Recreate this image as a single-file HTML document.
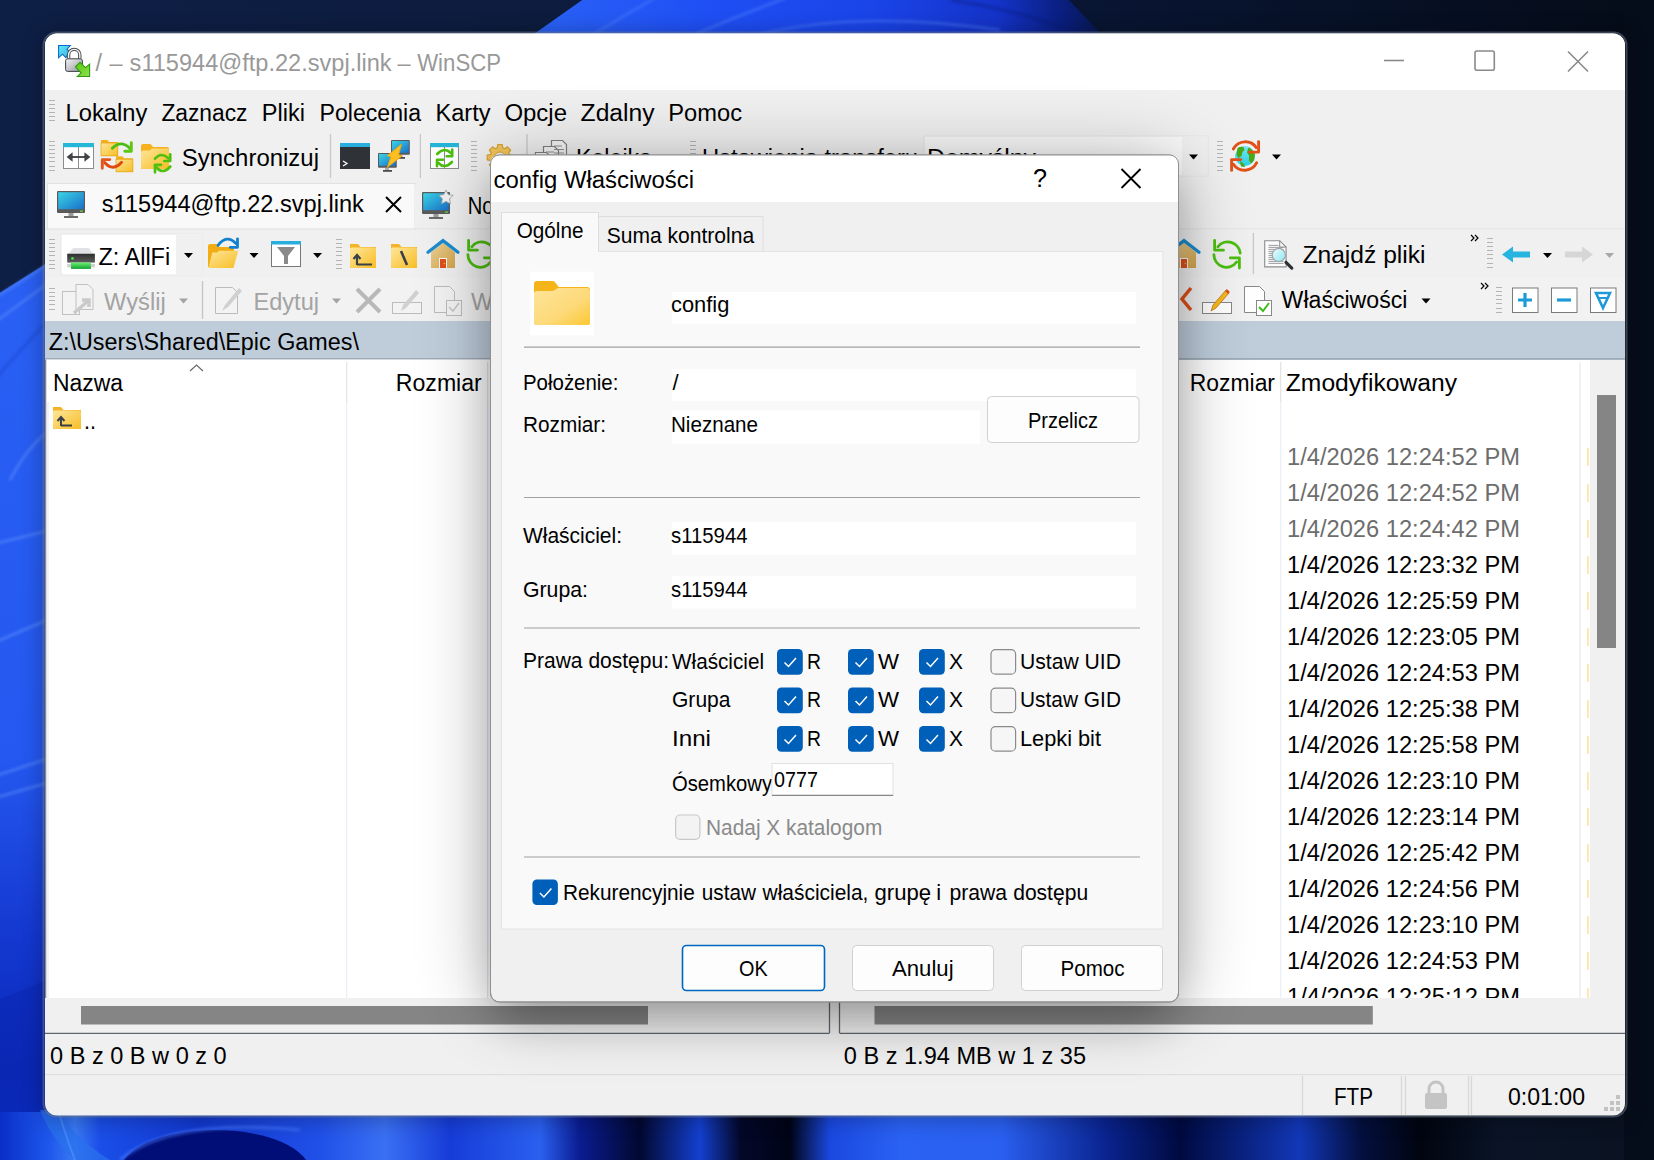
<!DOCTYPE html>
<html><head><meta charset="utf-8"><title>WinSCP</title>
<style>html,body{margin:0;padding:0;width:1654px;height:1160px;overflow:hidden;background:#0b1733}
svg{display:block} text{font-family:"Liberation Sans",sans-serif;white-space:pre}</style></head>
<body><svg width="1654" height="1160" viewBox="0 0 1654 1160" font-family="Liberation Sans, sans-serif">
<defs>
<linearGradient id="bgTop" x1="0" y1="0" x2="1" y2="0">
 <stop offset="0" stop-color="#0e1f46"/><stop offset="0.35" stop-color="#0d1c3e"/><stop offset="0.7" stop-color="#081430"/><stop offset="1" stop-color="#050c18"/>
</linearGradient>
<linearGradient id="bloomTop" x1="0" y1="0" x2="1" y2="0">
 <stop offset="0" stop-color="#2a62f6"/><stop offset="0.3" stop-color="#1f4ff5"/><stop offset="0.6" stop-color="#1a44e8"/><stop offset="0.82" stop-color="#1433c8"/><stop offset="0.93" stop-color="#0a1f80"/><stop offset="1" stop-color="#081850"/>
</linearGradient>
<linearGradient id="leftG" x1="0" y1="0" x2="0" y2="1">
 <stop offset="0" stop-color="#2a60f4"/><stop offset="0.55" stop-color="#2458f0"/><stop offset="0.75" stop-color="#1438d0"/><stop offset="0.9" stop-color="#0a28b8"/><stop offset="1" stop-color="#0c30c8"/>
</linearGradient>
<linearGradient id="botG" x1="0" y1="0" x2="1654" y2="0" gradientUnits="userSpaceOnUse">
 <stop offset="0.0000" stop-color="#0a2ec8"/><stop offset="0.0302" stop-color="#1e58ec"/><stop offset="0.0453" stop-color="#3a7af4"/><stop offset="0.0605" stop-color="#1a4ee8"/><stop offset="0.1209" stop-color="#1238d0"/><stop offset="0.1935" stop-color="#2050e8"/><stop offset="0.2328" stop-color="#3a70f4"/><stop offset="0.2721" stop-color="#163cd8"/><stop offset="0.3265" stop-color="#2a60f0"/><stop offset="0.3507" stop-color="#0a1c90"/><stop offset="0.3869" stop-color="#020830"/><stop offset="0.4232" stop-color="#1440d0"/><stop offset="0.4474" stop-color="#03082a"/><stop offset="0.4776" stop-color="#000416"/><stop offset="0.5018" stop-color="#1a48e0"/><stop offset="0.5441" stop-color="#2a62f4"/><stop offset="0.6046" stop-color="#2a60f0"/><stop offset="0.6681" stop-color="#0a2490"/><stop offset="0.7134" stop-color="#000a40"/><stop offset="0.7860" stop-color="#1238b8"/><stop offset="0.8222" stop-color="#041040"/><stop offset="0.8585" stop-color="#000510"/><stop offset="0.9069" stop-color="#0a1426"/><stop offset="1.0000" stop-color="#0a1220"/>
</linearGradient>
<filter id="dshadow" x="-30%" y="-30%" width="160%" height="160%"><feGaussianBlur stdDeviation="38"/></filter>
<filter id="dshadow2" x="-30%" y="-30%" width="160%" height="160%"><feGaussianBlur stdDeviation="20"/></filter>
<filter id="wshadow" x="-10%" y="-10%" width="120%" height="120%"><feGaussianBlur stdDeviation="10"/></filter>
<filter id="soft2" x="-10%" y="-10%" width="120%" height="120%"><feGaussianBlur stdDeviation="1.5"/></filter>
</defs>
<rect x="0" y="0" width="1654" height="1160" fill="url(#bgTop)" />
<path d="M585,-2 L534,34 L1101,34 L1067,-2 Z" fill="url(#bloomTop)"/>
<g fill="none" stroke="#5c8cff" stroke-width="2" opacity="0.55" filter="url(#soft2)"><path d="M655,-2 Q625,15 594,34"/><path d="M786,-2 Q740,15 696,34"/><path d="M760,34 Q860,10 1000,30"/><path d="M950,0 Q1020,10 1080,34" stroke="#0a1a70"/></g>
<path d="M-2,294 L47,263 L47,1160 L-2,1160 Z" fill="url(#leftG)"/>
<g fill="none" stroke="#6a9cff" stroke-width="2" opacity="0.6" filter="url(#soft2)"><path d="M-2,296 L47,265"/><path d="M-2,320 L47,284"/><path d="M-2,376 Q20,350 47,322" stroke="#1a40c8"/><path d="M10,480 Q25,450 47,432"/><path d="M-2,543 L47,531"/><path d="M-2,641 L47,620"/><path d="M-2,775 L47,759"/><path d="M-2,797 L47,783"/></g>
<path d="M-2,1000 L47,980 L47,1160 L-2,1160 Z" fill="#0a26b0" opacity="0.5"/>
<rect x="0" y="1112" width="1654" height="50" fill="url(#botG)" />
<path d="M40,1110 Q52,1140 75,1160 L110,1160 Q70,1135 60,1110 Z" fill="#2a70ec" opacity="0.75"/>
<path d="M75,1160 Q48,1090 46,1040" fill="none" stroke="#5a9aff" stroke-width="2" opacity="0.5"/>
<ellipse cx="215" cy="1172" rx="95" ry="42" fill="#020e78"/>
<path d="M120,1160 Q170,1118 300,1130" fill="none" stroke="#4a7cff" stroke-width="3" opacity="0.6" filter="url(#soft2)"/>
<rect x="1624" y="0" width="30" height="1160" fill="#050c18" />
<path d="M1624,0 L1654,0 L1654,1160 L1624,1160 Z" fill="#060d1a"/>
<rect x="40" y="30" width="1590" height="1092" rx="14" fill="#000" opacity="0.22" filter="url(#wshadow)"/>
<rect x="43.5" y="32.5" width="1583" height="1084" rx="13" fill="none" stroke="#6a7488" stroke-opacity="0.55" stroke-width="2"/>
<clipPath id="winclip"><rect x="45" y="33.5" width="1580" height="1082" rx="12"/></clipPath>
<g clip-path="url(#winclip)">
<rect x="45" y="33" width="1580" height="1083" fill="#f0f0f0" />
<rect x="45" y="33" width="1580" height="57" fill="#ffffff" />
</g>
<defs><linearGradient id="lockG" x1="0" y1="0" x2="1" y2="1"><stop offset="0" stop-color="#f4f4f6"/><stop offset="0.5" stop-color="#c4c6ca"/><stop offset="1" stop-color="#8e9096"/></linearGradient>
<linearGradient id="blueArr" x1="0" y1="0" x2="1" y2="1"><stop offset="0" stop-color="#6ae8fa"/><stop offset="1" stop-color="#2ab4e0"/></linearGradient>
<linearGradient id="grnArr" x1="0" y1="0" x2="1" y2="1"><stop offset="0" stop-color="#58c810"/><stop offset="1" stop-color="#8ee050"/></linearGradient></defs>
<g>
<path d="M58.6,45.5 L70.3,45.5 L67,49.2 L69.5,51.8 L65.8,57.6 L62.5,54.2 L58.6,57.8 Z" fill="url(#blueArr)" stroke="#0a6cc8" stroke-width="1.1" stroke-linejoin="miter"/>
<path d="M68.6,58.5 v-3.5 a5.6,5.6 0 0 1 11.2,0 v3.5" fill="none" stroke="#4a4c50" stroke-width="3.4"/>
<path d="M68.6,58.5 v-3.5 a5.6,5.6 0 0 1 11.2,0 v3.5" fill="none" stroke="#f4f4f4" stroke-width="1.4"/>
<rect x="65.6" y="58.8" width="16.8" height="12.6" rx="2" fill="url(#lockG)" stroke="#3e4044" stroke-width="1"/>
<path d="M75.4,66.8 L80,62.3 L85.5,67.6 L89.6,64.2 L89.6,76.5 L77.4,76.5 L81,72.8 Z" fill="url(#grnArr)" stroke="#2e9a10" stroke-width="1.1"/>
</g>
<text x="95.5" y="71.0" font-size="23.5" fill="#999999" >/</text>
<text x="109.5" y="71.0" font-size="23.5" fill="#999999" >–</text>
<text x="129.6" y="71.0" font-size="23.5" fill="#999999" textLength="262.0" lengthAdjust="spacingAndGlyphs" >s115944@ftp.22.svpj.link</text>
<text x="397.5" y="71.0" font-size="23.5" fill="#999999" >–</text>
<text x="417.2" y="71.0" font-size="23.5" fill="#999999" textLength="83.8" lengthAdjust="spacingAndGlyphs" >WinSCP</text>
<line x1="1384" y1="60.5" x2="1404" y2="60.5" stroke="#8a8a8a" stroke-width="1.6"/>
<rect x="1475" y="51" width="19.3" height="19.3" rx="2" fill="none" stroke="#8a8a8a" stroke-width="1.6"/>
<path d="M1568,51.5 L1588,71.5 M1588,51.5 L1568,71.5" stroke="#8a8a8a" stroke-width="1.6"/>
<path d="M49,100.5 h6 M49,104.5 h6 M49,108.5 h6 M49,112.5 h6 M49,116.5 h6 M49,120.5 h6" stroke="#b4b4b4" stroke-width="1"/>
<text x="65.6" y="121.0" font-size="23.5" fill="#000" textLength="81.8" lengthAdjust="spacingAndGlyphs" >Lokalny</text>
<text x="161.4" y="121.0" font-size="23.5" fill="#000" textLength="86.1" lengthAdjust="spacingAndGlyphs" >Zaznacz</text>
<text x="261.8" y="121.0" font-size="23.5" fill="#000" textLength="43.2" lengthAdjust="spacingAndGlyphs" >Pliki</text>
<text x="319.5" y="121.0" font-size="23.5" fill="#000" textLength="101.5" lengthAdjust="spacingAndGlyphs" >Polecenia</text>
<text x="435.6" y="121.0" font-size="23.5" fill="#000" textLength="54.9" lengthAdjust="spacingAndGlyphs" >Karty</text>
<text x="504.4" y="121.0" font-size="23.5" fill="#000" textLength="62.6" lengthAdjust="spacingAndGlyphs" >Opcje</text>
<text x="580.6" y="121.0" font-size="23.5" fill="#000" textLength="74.0" lengthAdjust="spacingAndGlyphs" >Zdalny</text>
<text x="668.3" y="121.0" font-size="23.5" fill="#000" textLength="73.7" lengthAdjust="spacingAndGlyphs" >Pomoc</text>
<path d="M49,141.5 h6 M49,145.5 h6 M49,149.5 h6 M49,153.5 h6 M49,157.5 h6 M49,161.5 h6 M49,166.5 h6 M49,170.5 h6" stroke="#b4b4b4" stroke-width="1"/>
<g><rect x="63.5" y="143.5" width="30" height="25" fill="#fff" stroke="#8a8c90" stroke-width="1"/>
<rect x="63" y="143" width="31" height="4.2" fill="#26b6d8"/>
<line x1="78.5" y1="147" x2="78.5" y2="168" stroke="#8a8c90" stroke-width="1"/>
<path d="M66.6,157 L72.6,152.2 V161.8 Z M90.4,157 L84.4,152.2 V161.8 Z" fill="#40444a"/><path d="M72,157 H85" stroke="#2e3236" stroke-width="1.7"/></g>
<path d="M101,155.9 V140 h6.5 l1.5,2 h8.8 v13.9 Z" fill="#f5b01a"/><rect x="101" y="143" width="16.8" height="12.9" fill="url(#fldG)" stroke="#e2a210" stroke-width="0.7"/>
<path d="M116,171.79999999999998 V156.2 h6.5 l1.5,2 h8.899999999999999 v13.6 Z" fill="#f5b01a"/><rect x="116" y="159.2" width="16.9" height="12.6" fill="url(#fldG)" stroke="#e2a210" stroke-width="0.7"/>
<g fill="none" stroke-linecap="round" stroke-linejoin="round"><path d="M112.3,148.2 Q121,139.5 130,148.5" stroke="#4cbc10" stroke-width="2.9"/><path d="M131.3,142.8 V151.3 H124.8" stroke="#5cc814" stroke-width="2.9"/>
<path d="M121.6,162.3 Q113,172 104.6,162.5" stroke="#e04a10" stroke-width="2.9"/><path d="M102.3,168.3 V159.6 H109.8" stroke="#e25618" stroke-width="2.9"/></g>
<path d="M141,169 V146 a2,2 0 0 1 2,-2 h7.5 l2.5,3 h14 a2,2 0 0 1 2,2 V169 Z" fill="#f6b11c"/>
<path d="M141,168 V152.5 a2,2 0 0 1 2,-2 h7 l2,-2 h15 a2,2 0 0 1 2,2 V168 a1,1 0 0 1 -1,1 H142 a1,1 0 0 1 -1,-1 Z" fill="url(#fldG)"/>
<g fill="none" stroke-linecap="round" stroke-linejoin="round" stroke="#50c010" stroke-width="2.7"><path d="M155,158.7 Q161.5,151.5 168.3,158.3"/><path d="M170.2,154.3 V161 H164.3"/>
<path d="M170.3,166.5 Q163,175 156.5,167.5"/><path d="M155,172.3 V164.8 H161"/></g>
<text x="181.8" y="166.0" font-size="23.5" fill="#000" textLength="137.2" lengthAdjust="spacingAndGlyphs" >Synchronizuj</text>
<line x1="330.5" y1="134" x2="330.5" y2="178" stroke="#c8c8c8" stroke-width="1.3"/>
<g><rect x="340" y="143" width="30" height="26" fill="#2f3236"/><rect x="340" y="143" width="30" height="4" fill="#27aede"/>
<path d="M343,161 l4,2.5 l-4,2.5" fill="none" stroke="#fff" stroke-width="1.3"/></g>
<g><rect x="391" y="140" width="18.8" height="14.8" rx="1" fill="#58595c"/><rect x="392" y="141" width="16.8" height="11.8" fill="url(#monG)"/><rect x="398.5" y="155" width="4" height="2" fill="#a8acb0"/><rect x="396" y="157" width="9" height="1.8" fill="#4a4c50"/>
<rect x="378" y="153" width="18.8" height="14.8" rx="1" fill="#58595c"/><rect x="379" y="154" width="16.8" height="11.8" fill="url(#monG)"/><rect x="385" y="168" width="4" height="2" fill="#a8acb0"/><rect x="383" y="170" width="9" height="1.8" fill="#4a4c50"/>
<path d="M401.7,144.1 L387.2,155.7 L390.8,156.9 L387.2,167.4 L402,156 L398.6,154.8 Z" fill="#fbbf24" stroke="#f0a500" stroke-width="0.8" stroke-linejoin="round"/></g>
<line x1="420.4" y1="134" x2="420.4" y2="178" stroke="#c8c8c8" stroke-width="1.3"/>
<g><rect x="430.5" y="143.5" width="28" height="25" fill="#fff" stroke="#8a8c90" stroke-width="1"/><rect x="430" y="143" width="29" height="4.2" fill="#26b4d8"/>
<line x1="444.5" y1="147" x2="444.5" y2="168" stroke="#8a8c90" stroke-width="1"/>
<g fill="none" stroke="#4cbe10" stroke-width="2.6" stroke-linecap="round" stroke-linejoin="round"><path d="M437.2,154 Q444.5,146.5 450.8,153"/><path d="M452.2,149.6 V156.3 H446.7"/>
<path d="M452,162 Q444.5,169.5 438.5,163"/><path d="M437,166.3 V159.8 H443"/></g></g>
<path d="M471,141.5 h6 M471,145.5 h6 M471,149.5 h6 M471,153.5 h6 M471,157.5 h6 M471,161.5 h6 M471,166.5 h6 M471,170.5 h6" stroke="#b4b4b4" stroke-width="1"/>
<path d="M509.6,154.7 L512.8,155.2 L512.8,159.8 L509.6,160.3 L508.8,162.3 L510.7,164.9 L507.4,168.2 L504.8,166.3 L502.8,167.1 L502.3,170.3 L497.7,170.3 L497.2,167.1 L495.2,166.3 L492.6,168.2 L489.3,164.9 L491.2,162.3 L490.4,160.3 L487.2,159.8 L487.2,155.2 L490.4,154.7 L491.2,152.7 L489.3,150.1 L492.6,146.8 L495.2,148.7 L497.2,147.9 L497.7,144.7 L502.3,144.7 L502.8,147.9 L504.8,148.7 L507.4,146.8 L510.7,150.1 L508.8,152.7 Z" fill="#f2c65a" stroke="#d9a332" stroke-width="1.2" stroke-linejoin="round"/><circle cx="500" cy="157.5" r="5.5" fill="#f0f0f0" stroke="#d9a332" stroke-width="1"/>
<line x1="527" y1="134" x2="527" y2="178" stroke="#c8c8c8" stroke-width="1.3"/>
<g fill="#f6f6f6" stroke="#808080" stroke-width="1.2"><path d="M551.5,140.5 h11 l4,4 v15 h-15 Z"/><path d="M543.5,146.5 h11 l4,4 v15 h-15 Z"/><path d="M535.5,152.5 h11 l4,4 v15 h-15 Z"/></g>
<path d="M554,146 h8 M554,149.5 h10 M554,153 h10 M546,152 h8 M546,155.5 h10" stroke="#909090" stroke-width="1"/>
<text x="576.0" y="166.0" font-size="23.5" fill="#000" textLength="76.0" lengthAdjust="spacingAndGlyphs" >Kolejka</text>
<path d="M668.5,155.5 h9 l-4.5,5 Z" fill="#000"/>
<path d="M690,141.5 h6 M690,145.5 h6 M690,149.5 h6 M690,153.5 h6 M690,157.5 h6 M690,161.5 h6 M690,166.5 h6 M690,170.5 h6" stroke="#b4b4b4" stroke-width="1"/>
<text x="702.0" y="166.0" font-size="23.5" fill="#000" textLength="216.0" lengthAdjust="spacingAndGlyphs" >Ustawienia transferu</text>
<rect x="924" y="136" width="284" height="40" fill="#f9f9f9" stroke="#e3e3e3" stroke-width="1"/>
<rect x="1182" y="137" width="25" height="38" fill="#f0f0f0" />
<text x="927.0" y="166.0" font-size="23.5" fill="#000" textLength="109.0" lengthAdjust="spacingAndGlyphs" >Domyślny</text>
<path d="M1189.0,154.5 h9 l-4.5,5 Z" fill="#000"/>
<path d="M1217,141.5 h6 M1217,145.5 h6 M1217,149.5 h6 M1217,153.5 h6 M1217,157.5 h6 M1217,161.5 h6 M1217,166.5 h6 M1217,170.5 h6" stroke="#b4b4b4" stroke-width="1"/>
<defs><linearGradient id="globeG" x1="0" y1="0" x2="0" y2="1"><stop offset="0" stop-color="#74e6f6"/><stop offset="1" stop-color="#2ad0e0"/></linearGradient></defs>
<g><circle cx="1245" cy="156" r="10" fill="url(#globeG)"/>
<path d="M1237.5,148 q3,-2 6,-1 l1,3 l-2,2 l-1,4 l-3,2 l-2,-3 Z M1249,147.5 q4,2 6,7 l-1,6 l-3,3 l-2,-3 l0,-5 l-2,-3 l1,-4 Z M1240,161 l4,3 l1,3 l-4,-0.5 Z" fill="#4aa818"/>
<g fill="none" stroke="#e2501a" stroke-width="2.9" stroke-linecap="round" stroke-linejoin="round">
<path d="M1233.3,149 A13.5,13.5 0 0 1 1256.3,147.6"/><path d="M1258.6,141.6 V152.1 H1249.2"/>
<path d="M1256.7,162.7 A13.5,13.5 0 0 1 1233.4,164.3"/><path d="M1231.6,170.4 V159.6 H1240.8"/></g></g>
<path d="M1272.0,154.5 h9 l-4.5,5 Z" fill="#000"/>
<rect x="45" y="180" width="1580" height="49" fill="#f0f0f0" />
<rect x="47.5" y="183.5" width="367.5" height="46" fill="#f9f9f9" stroke="#e2e2e2" stroke-width="1"/>
<rect x="415" y="185.5" width="120" height="43" fill="#f0f0f0" />
<line x1="45" y1="229" x2="1625" y2="229" stroke="#dedede" stroke-width="1"/>
<defs><linearGradient id="homeG" x1="0" y1="0" x2="1" y2="1"><stop offset="0" stop-color="#ecd298"/><stop offset="1" stop-color="#d4a448"/></linearGradient></defs><defs><linearGradient id="monG" x1="0" y1="0" x2="1" y2="1"><stop offset="0" stop-color="#3ad4e6"/><stop offset="1" stop-color="#1a70c8"/></linearGradient></defs>
<g><rect x="57" y="191" width="28" height="22" rx="1" fill="#5a5a5a"/><rect x="58.2" y="192.2" width="25.6" height="17" fill="url(#monG)"/>
<rect x="80" y="210.5" width="3" height="1.2" fill="#6cdc3c"/><rect x="68.5" y="213" width="5" height="3" fill="#9a9a9a"/><rect x="64" y="216" width="14" height="2" fill="#6a6a6a"/></g>
<text x="101.8" y="212.0" font-size="23.5" fill="#000" textLength="262.0" lengthAdjust="spacingAndGlyphs" >s115944@ftp.22.svpj.link</text>
<path d="M386,197 L401,212 M401,197 L386,212" stroke="#000" stroke-width="2"/>
<g><rect x="422" y="192" width="28" height="22" rx="1" fill="#5a5a5a"/><rect x="423.2" y="193.2" width="25.6" height="17" fill="url(#monG)"/>
<rect x="445" y="211.5" width="3" height="1.2" fill="#6cdc3c"/><rect x="433.5" y="214" width="5" height="3" fill="#9a9a9a"/><rect x="429" y="217" width="14" height="2" fill="#6a6a6a"/><path d="M446,190 l2.2,4.6 l5,0.7 l-3.6,3.5 l0.9,5 l-4.5,-2.4 l-4.5,2.4 l0.9,-5 l-3.6,-3.5 l5,-0.7 Z" fill="#f2f2f2" stroke="#9a9a9a" stroke-width="0.8"/></g>
<text x="467.7" y="214.0" font-size="23.5" fill="#000" textLength="102.0" lengthAdjust="spacingAndGlyphs" >Nowa karta</text>
<rect x="45" y="229.5" width="1580" height="48" fill="#f0f0f0" />
<path d="M49,239.5 h6 M49,243.5 h6 M49,247.5 h6 M49,251.5 h6 M49,255.5 h6 M49,260.5 h6 M49,264.5 h6 M49,268.5 h6" stroke="#b4b4b4" stroke-width="1"/>
<rect x="61" y="234" width="141" height="41" fill="#ffffff" stroke="#e6e6e6" stroke-width="1"/>
<rect x="176" y="235" width="25.5" height="39" fill="#f0f0f0" />
<path d="M184.0,253.0 h9 l-4.5,5 Z" fill="#000"/>
<defs><linearGradient id="drvG" x1="0" y1="0" x2="0" y2="1"><stop offset="0" stop-color="#2e2e2e"/><stop offset="1" stop-color="#5c5c5c"/></linearGradient>
<linearGradient id="grnG" x1="0" y1="0" x2="0" y2="1"><stop offset="0" stop-color="#6af070"/><stop offset="1" stop-color="#10a030"/></linearGradient></defs>
<g><path d="M73.2,248.1 H88.7 L93.4,253.5 H68.5 Z" fill="#e0e2e6"/><rect x="67.2" y="253.7" width="27.7" height="8.9" fill="url(#drvG)"/><circle cx="72.5" cy="258.4" r="1.4" fill="#3ce048"/>
<rect x="67.2" y="264" width="27.7" height="3.4" fill="#d0d0d0"/><rect x="71" y="262.6" width="19.9" height="6.3" fill="url(#grnG)"/></g>
<text x="98.4" y="265.2" font-size="23.5" fill="#000" textLength="71.8" lengthAdjust="spacingAndGlyphs" >Z: AllFi</text>
<path d="M208,267 V246 a2,2 0 0 1 2,-2 h6.5 l2.5,3 h13 a2,2 0 0 1 2,2 V267 Z" fill="#f2ad14"/>
<path d="M212.3,252.6 l4.8,0 l2,-1.8 h19.2 l-4.5,16 a1.5,1.5 0 0 1 -1.5,1.2 H209.8 a1.2,1.2 0 0 1 -1.1,-1.5 Z" fill="url(#fldG)"/>
<g fill="none" stroke-linecap="round" stroke-linejoin="round" stroke="#1080d0" stroke-width="2.8"><path d="M218,245.3 Q227,234 236,243.5"/><path d="M237.5,238.8 V247.3 H230.3"/></g>
<path d="M249.5,253.0 h9 l-4.5,5 Z" fill="#000"/>
<g><rect x="271.5" y="241.5" width="29" height="25" fill="#fff" stroke="#777" stroke-width="1"/><rect x="271" y="241" width="30" height="3.5" fill="#27aede"/>
<path d="M277,247 h18 l-7,9 v8 h-4 v-8 Z" fill="#8a8a8a"/></g>
<path d="M313.0,253.0 h9 l-4.5,5 Z" fill="#000"/>
<path d="M336,239.5 h6 M336,243.5 h6 M336,247.5 h6 M336,251.5 h6 M336,255.5 h6 M336,260.5 h6 M336,264.5 h6 M336,268.5 h6" stroke="#b4b4b4" stroke-width="1"/>
<defs><linearGradient id="fldG" x1="0" y1="0" x2="1" y2="1"><stop offset="0" stop-color="#fde69a"/><stop offset="1" stop-color="#f8bd24"/></linearGradient></defs>
<g><path d="M350,244 h8 l2.5,3 h15.5 v21 h-26 Z" fill="#f3b42a"/><rect x="350" y="247.5" width="26" height="20.5" rx="1.5" fill="url(#fldG)"/></g>
<path d="M357,265 v-9 M353.5,259 l3.5,-4 l3.5,4 M357,264.5 h15" fill="none" stroke="#3a4048" stroke-width="2.2"/>
<g><path d="M391,244 h8 l2.5,3 h15.5 v21 h-26 Z" fill="#f3b42a"/><rect x="391" y="247.5" width="26" height="20.5" rx="1.5" fill="url(#fldG)"/></g>
<path d="M401,251 l6,14" stroke="#3a4048" stroke-width="2.6"/>
<g><path d="M431,252.5 l12,-10 l12,10 V268 H431 Z" fill="url(#homeG)"/><path d="M428,252.3 L443,240.6 L458,252.3" fill="none" stroke="#1a8cd0" stroke-width="3.3" stroke-linecap="round" stroke-linejoin="miter"/>
<rect x="439" y="258" width="8" height="10" fill="#fafafa"/><rect x="440" y="259" width="6" height="9" fill="#e0501a"/><circle cx="444.3" cy="263.5" r="0.7" fill="#f4c040"/></g>
<g transform="translate(-746,0)" fill="none" stroke="#4cbe10" stroke-width="2.8" stroke-linecap="round" stroke-linejoin="round">
<path d="M1217.8,246.8 A12.5,12.5 0 0 1 1240.2,253.2"/><path d="M1214.6,240.3 V250.2 H1223.5"/>
<path d="M1213.9,254.6 A12.5,12.5 0 0 0 1236.6,262"/><path d="M1239.4,268 V257.8 H1230.3"/></g>
<g><path d="M1172,252.5 l12,-10 l12,10 V268 H1172 Z" fill="url(#homeG)"/><path d="M1169,252.3 L1184,240.6 L1199,252.3" fill="none" stroke="#1a8cd0" stroke-width="3.3" stroke-linecap="round" stroke-linejoin="miter"/>
<rect x="1180" y="258" width="8" height="10" fill="#fafafa"/><rect x="1181" y="259" width="6" height="9" fill="#e0501a"/><circle cx="1185.3" cy="263.5" r="0.7" fill="#f4c040"/></g>
<g transform="translate(0,0)" fill="none" stroke="#4cbe10" stroke-width="2.8" stroke-linecap="round" stroke-linejoin="round">
<path d="M1217.8,246.8 A12.5,12.5 0 0 1 1240.2,253.2"/><path d="M1214.6,240.3 V250.2 H1223.5"/>
<path d="M1213.9,254.6 A12.5,12.5 0 0 0 1236.6,262"/><path d="M1239.4,268 V257.8 H1230.3"/></g>
<line x1="1253.4" y1="233" x2="1253.4" y2="274" stroke="#c8c8c8" stroke-width="1.3"/>
<defs><linearGradient id="magG" x1="0" y1="0" x2="1" y2="1"><stop offset="0" stop-color="#f0fcfe"/><stop offset="1" stop-color="#88e8f0"/></linearGradient></defs>
<g><path d="M1264.7,240.7 h15 l6.4,6.4 v19.8 h-21.4 Z" fill="#fbfbfb" stroke="#8a8c90" stroke-width="1.1"/><path d="M1279.7,240.7 v6.4 h6.4" fill="none" stroke="#8a8c90" stroke-width="1"/>
<path d="M1268.5,245.4 h10 M1268.5,247.4 h15 M1268.5,249.4 h15 M1268.5,251.4 h15 M1268.5,253.4 h15 M1268.5,255.4 h15 M1268.5,257.4 h15 M1268.5,259.4 h15 M1268.5,261.4 h15 M1268.5,263.4 h15" stroke="#909296" stroke-width="0.9"/>
<circle cx="1278.8" cy="255" r="6.6" fill="url(#magG)" stroke="#a0a2a6" stroke-width="1.2"/><path d="M1286,262.3 l5.8,5.8" stroke="#2e3034" stroke-width="3.2" stroke-linecap="round"/></g>
<text x="1302.5" y="262.5" font-size="23.5" fill="#000" textLength="123.0" lengthAdjust="spacingAndGlyphs" >Znajdź pliki</text>
<path d="M1471,235 l3,3 l-3,3 M1475,235 l3,3 l-3,3" fill="none" stroke="#000" stroke-width="1.2"/>
<path d="M1487,238.5 h6 M1487,242.5 h6 M1487,246.5 h6 M1487,250.5 h6 M1487,254.5 h6 M1487,258.5 h6 M1487,263.5 h6 M1487,267.5 h6" stroke="#b4b4b4" stroke-width="1"/>
<path d="M1502,254.5 l11,-8 v5 h17 v6 h-17 v5 Z" fill="#27b4e0"/>
<path d="M1543.0,253.0 h9 l-4.5,5 Z" fill="#000"/>
<path d="M1593,254.5 l-11,-8 v5 h-17 v6 h17 v5 Z" fill="#d6d6d6"/>
<path d="M1605.0,253.0 h9 l-4.5,5 Z" fill="#a8a8a8"/>
<rect x="45" y="277.5" width="1580" height="43.5" fill="#f2f2f2" />
<path d="M49,288.5 h6 M49,292.5 h6 M49,296.5 h6 M49,300.5 h6 M49,304.5 h6 M49,309.5 h6" stroke="#b4b4b4" stroke-width="1"/>
<g opacity="0.55"><rect x="62.5" y="291.5" width="17" height="23" fill="#f4f4f4" stroke="#999" stroke-width="1"/><path d="M76,284.5 h12 l5,5 v20 h-17 Z" fill="#f4f4f4" stroke="#999" stroke-width="1"/>
<path d="M74,313 l14,-12 M82,300 h7 v7" fill="none" stroke="#aaa" stroke-width="3.5"/></g>
<text x="104.0" y="309.6" font-size="23.5" fill="#a3a3a3" textLength="61.7" lengthAdjust="spacingAndGlyphs" >Wyślij</text>
<path d="M179.0,298.5 h9 l-4.5,5 Z" fill="#a3a3a3"/>
<line x1="202.5" y1="281" x2="202.5" y2="319" stroke="#c4c4c4" stroke-width="1.3"/>
<g opacity="0.6"><path d="M215.5,287.5 h17 l5,5 v21 h-22 Z" fill="#f4f4f4" stroke="#999" stroke-width="1"/><path d="M222,311 l3,-6 l14,-17 l3,3 l-14,16 Z" fill="#bbb"/></g>
<text x="253.5" y="309.6" font-size="23.5" fill="#a3a3a3" textLength="65.5" lengthAdjust="spacingAndGlyphs" >Edytuj</text>
<path d="M332.0,298.5 h9 l-4.5,5 Z" fill="#a3a3a3"/>
<path d="M357,289 L380,312 M380,289 L357,312" stroke="#b8b8b8" stroke-width="4"/>
<g opacity="0.6"><rect x="392.5" y="302.5" width="29" height="11" fill="#f4f4f4" stroke="#999" stroke-width="1"/><path d="M401,311 l2,-6 l13,-15 l3,3 l-13,15 Z" fill="#bbb"/></g>
<g opacity="0.6"><path d="M434.5,286.5 h15 l5,5 v21 h-20 Z" fill="#f4f4f4" stroke="#999" stroke-width="1"/><rect x="446.5" y="300.5" width="15" height="15" fill="#f4f4f4" stroke="#999" stroke-width="1"/><path d="M449,307 l4,4 l6,-8" fill="none" stroke="#aaa" stroke-width="1.5"/></g>
<text x="471.0" y="309.6" font-size="23.5" fill="#a3a3a3" textLength="126.0" lengthAdjust="spacingAndGlyphs" >Właściwości</text>
<path d="M1191,288 l-9,11 l9,11" fill="none" stroke="#e0501a" stroke-width="3.5"/>
<g><rect x="1202.5" y="302.5" width="29" height="11" fill="#fff" stroke="#888" stroke-width="1"/><path d="M1211,311 l2,-6 l13,-15 l3,3 l-13,15 Z" fill="#f4b81c" stroke="#c07818" stroke-width="0.8"/><path d="M1226,290 l3,3" stroke="#e0501a" stroke-width="2.5"/></g>
<g><path d="M1244.5,286.5 h15 l5,5 v21 h-20 Z" fill="#fff" stroke="#888" stroke-width="1"/><rect x="1256.5" y="300.5" width="15" height="15" fill="#fff" stroke="#888" stroke-width="1"/><path d="M1259,307 l4,4 l6,-8" fill="none" stroke="#3cba1a" stroke-width="2"/></g>
<text x="1281.6" y="308.4" font-size="23.5" fill="#000" textLength="125.8" lengthAdjust="spacingAndGlyphs" >Właściwości</text>
<path d="M1421.5,298.5 h9 l-4.5,5 Z" fill="#000"/>
<path d="M1481,283 l3,3 l-3,3 M1485,283 l3,3 l-3,3" fill="none" stroke="#000" stroke-width="1.2"/>
<path d="M1496,287.5 h6 M1496,291.5 h6 M1496,295.5 h6 M1496,299.5 h6 M1496,303.5 h6 M1496,308.5 h6 M1496,312.5 h6" stroke="#b4b4b4" stroke-width="1"/>
<rect x="1512.5" y="288" width="25.5" height="24.5" fill="#ffffff" stroke="#7a7a7a" stroke-width="1"/>
<rect x="1551.5" y="288" width="25.5" height="24.5" fill="#ffffff" stroke="#7a7a7a" stroke-width="1"/>
<rect x="1590.5" y="288" width="25.5" height="24.5" fill="#ffffff" stroke="#7a7a7a" stroke-width="1"/>
<path d="M1525,293 v14 M1518,300 h14" stroke="#1e9ad8" stroke-width="3.2"/>
<path d="M1557,300 h14" stroke="#1e9ad8" stroke-width="3.2"/>
<path d="M1596,293 h14 l-7,15 Z" fill="none" stroke="#1e9ad8" stroke-width="2.6"/><path d="M1598.5,298 h9" stroke="#1e9ad8" stroke-width="2"/>
<defs><linearGradient id="pathG" x1="0" y1="0" x2="1" y2="0"><stop offset="0" stop-color="#bccad9"/><stop offset="0.85" stop-color="#bfcddb"/><stop offset="1" stop-color="#a9b7c6"/></linearGradient></defs>
<rect x="45" y="321" width="784" height="38.5" fill="#bfcddb" />
<rect x="839" y="321" width="786" height="38.5" fill="#bfcddb" />
<line x1="45" y1="359" x2="1625" y2="359" stroke="#7d8a96" stroke-width="1"/>
<text x="48.7" y="349.8" font-size="23.5" fill="#000" textLength="310.3" lengthAdjust="spacingAndGlyphs" >Z:\Users\Shared\Epic Games\</text>
<rect x="45" y="359.5" width="784" height="638.5" fill="#ffffff" />
<rect x="45" y="359.5" width="1.3" height="638.5" fill="#8a8a8a" />
<rect x="839" y="360" width="786" height="638" fill="#ffffff" />
<line x1="346.7" y1="362" x2="346.7" y2="402" stroke="#e4e4e4" stroke-width="1.3"/>
<line x1="487.7" y1="362" x2="487.7" y2="402" stroke="#e4e4e4" stroke-width="1.3"/>
<text x="53.0" y="391.0" font-size="23.5" fill="#000" textLength="70.0" lengthAdjust="spacingAndGlyphs" >Nazwa</text>
<text x="395.8" y="391.0" font-size="23.5" fill="#000" textLength="86.0" lengthAdjust="spacingAndGlyphs" >Rozmiar</text>
<path d="M190,371 l6.5,-6 l6.5,6" fill="none" stroke="#6a6a6a" stroke-width="1.2"/>
<line x1="48" y1="402" x2="48" y2="998" stroke="#e6eef8" stroke-width="1.3"/>
<line x1="346.7" y1="402" x2="346.7" y2="998" stroke="#eaf0f8" stroke-width="1.3"/>
<line x1="487.7" y1="402" x2="487.7" y2="998" stroke="#dde5ee" stroke-width="1.3"/>
<g><path d="M53,407 h8 l2.5,3 h17.5 v19 h-28 Z" fill="#f3b42a"/><rect x="53" y="410.5" width="28" height="18.5" rx="1.5" fill="url(#fldG)"/></g>
<path d="M61,426 v-8 M57.5,421 l3.5,-4 l3.5,4 M61,425.5 h11" fill="none" stroke="#3a4048" stroke-width="2"/>
<text x="84.0" y="429.0" font-size="23.5" fill="#000" textLength="12.0" lengthAdjust="spacingAndGlyphs" >..</text>
<text x="1189.8" y="391.0" font-size="23.5" fill="#000" textLength="85.2" lengthAdjust="spacingAndGlyphs" >Rozmiar</text>
<line x1="1280.7" y1="362" x2="1280.7" y2="402" stroke="#e4e4e4" stroke-width="1.3"/>
<text x="1285.8" y="391.0" font-size="23.5" fill="#000" textLength="171.2" lengthAdjust="spacingAndGlyphs" >Zmodyfikowany</text>
<line x1="1580" y1="362" x2="1580" y2="998" stroke="#ebebeb" stroke-width="1.3"/>
<line x1="1280.7" y1="402" x2="1280.7" y2="998" stroke="#eaf0f8" stroke-width="1.3"/>
<clipPath id="rpclip"><rect x="839" y="402" width="751" height="596"/></clipPath><g clip-path="url(#rpclip)">
<text x="1287.0" y="465.0" font-size="23.5" fill="#6d6d6d" textLength="233.0" lengthAdjust="spacingAndGlyphs" >1/4/2026 12:24:52 PM</text>
<rect x="1587" y="448" width="2" height="18" fill="#fde9b0" />
<text x="1287.0" y="501.0" font-size="23.5" fill="#6d6d6d" textLength="233.0" lengthAdjust="spacingAndGlyphs" >1/4/2026 12:24:52 PM</text>
<rect x="1587" y="484" width="2" height="18" fill="#fde9b0" />
<text x="1287.0" y="537.0" font-size="23.5" fill="#6d6d6d" textLength="233.0" lengthAdjust="spacingAndGlyphs" >1/4/2026 12:24:42 PM</text>
<rect x="1587" y="520" width="2" height="18" fill="#fde9b0" />
<text x="1287.0" y="573.0" font-size="23.5" fill="#000" textLength="233.0" lengthAdjust="spacingAndGlyphs" >1/4/2026 12:23:32 PM</text>
<rect x="1587" y="556" width="2" height="18" fill="#fde9b0" />
<text x="1287.0" y="609.0" font-size="23.5" fill="#000" textLength="233.0" lengthAdjust="spacingAndGlyphs" >1/4/2026 12:25:59 PM</text>
<rect x="1587" y="592" width="2" height="18" fill="#fde9b0" />
<text x="1287.0" y="645.0" font-size="23.5" fill="#000" textLength="233.0" lengthAdjust="spacingAndGlyphs" >1/4/2026 12:23:05 PM</text>
<rect x="1587" y="628" width="2" height="18" fill="#fde9b0" />
<text x="1287.0" y="681.0" font-size="23.5" fill="#000" textLength="233.0" lengthAdjust="spacingAndGlyphs" >1/4/2026 12:24:53 PM</text>
<rect x="1587" y="664" width="2" height="18" fill="#fde9b0" />
<text x="1287.0" y="717.0" font-size="23.5" fill="#000" textLength="233.0" lengthAdjust="spacingAndGlyphs" >1/4/2026 12:25:38 PM</text>
<rect x="1587" y="700" width="2" height="18" fill="#fde9b0" />
<text x="1287.0" y="753.0" font-size="23.5" fill="#000" textLength="233.0" lengthAdjust="spacingAndGlyphs" >1/4/2026 12:25:58 PM</text>
<rect x="1587" y="736" width="2" height="18" fill="#fde9b0" />
<text x="1287.0" y="789.0" font-size="23.5" fill="#000" textLength="233.0" lengthAdjust="spacingAndGlyphs" >1/4/2026 12:23:10 PM</text>
<rect x="1587" y="772" width="2" height="18" fill="#fde9b0" />
<text x="1287.0" y="825.0" font-size="23.5" fill="#000" textLength="233.0" lengthAdjust="spacingAndGlyphs" >1/4/2026 12:23:14 PM</text>
<rect x="1587" y="808" width="2" height="18" fill="#fde9b0" />
<text x="1287.0" y="861.0" font-size="23.5" fill="#000" textLength="233.0" lengthAdjust="spacingAndGlyphs" >1/4/2026 12:25:42 PM</text>
<rect x="1587" y="844" width="2" height="18" fill="#fde9b0" />
<text x="1287.0" y="897.0" font-size="23.5" fill="#000" textLength="233.0" lengthAdjust="spacingAndGlyphs" >1/4/2026 12:24:56 PM</text>
<rect x="1587" y="880" width="2" height="18" fill="#fde9b0" />
<text x="1287.0" y="933.0" font-size="23.5" fill="#000" textLength="233.0" lengthAdjust="spacingAndGlyphs" >1/4/2026 12:23:10 PM</text>
<rect x="1587" y="916" width="2" height="18" fill="#fde9b0" />
<text x="1287.0" y="969.0" font-size="23.5" fill="#000" textLength="233.0" lengthAdjust="spacingAndGlyphs" >1/4/2026 12:24:53 PM</text>
<rect x="1587" y="952" width="2" height="18" fill="#fde9b0" />
<text x="1287.0" y="1005.0" font-size="23.5" fill="#000" textLength="233.0" lengthAdjust="spacingAndGlyphs" >1/4/2026 12:25:12 PM</text>
<rect x="1587" y="988" width="2" height="18" fill="#fde9b0" />
</g>
<rect x="1590" y="360" width="35" height="638" fill="#f0f0f0" />
<rect x="1597" y="395" width="19" height="253" fill="#858585" />
<rect x="45" y="998" width="1580" height="35" fill="#f0f0f0" />
<rect x="81" y="1006" width="567" height="18.5" fill="#858585" />
<rect x="874.5" y="1006" width="498.3" height="18.5" fill="#858585" />
<line x1="829.5" y1="998" x2="829.5" y2="1033" stroke="#60666e" stroke-width="1.3"/>
<line x1="839.5" y1="998" x2="839.5" y2="1033" stroke="#60666e" stroke-width="1.3"/>
<path d="M45,1033.3 H829.5 M839.5,1033.3 H1625" stroke="#60666e" stroke-width="1.3"/>
<text x="50.0" y="1063.5" font-size="23.5" fill="#000" textLength="176.7" lengthAdjust="spacingAndGlyphs" >0 B z 0 B w 0 z 0</text>
<text x="843.8" y="1064.0" font-size="23.5" fill="#000" textLength="242.2" lengthAdjust="spacingAndGlyphs" >0 B z 1.94 MB w 1 z 35</text>
<line x1="45" y1="1074.6" x2="1625" y2="1074.6" stroke="#dcdcdc" stroke-width="1"/>
<line x1="1302.5" y1="1076" x2="1302.5" y2="1115" stroke="#d8d8d8" stroke-width="1.3"/>
<line x1="1401.5" y1="1076" x2="1401.5" y2="1115" stroke="#d8d8d8" stroke-width="1.3"/>
<line x1="1405.5" y1="1076" x2="1405.5" y2="1115" stroke="#d8d8d8" stroke-width="1.3"/>
<line x1="1468.5" y1="1076" x2="1468.5" y2="1115" stroke="#d8d8d8" stroke-width="1.3"/>
<line x1="1471.5" y1="1076" x2="1471.5" y2="1115" stroke="#d8d8d8" stroke-width="1.3"/>
<text x="1334.0" y="1105.0" font-size="23.5" fill="#000" textLength="39.0" lengthAdjust="spacingAndGlyphs" >FTP</text>
<g fill="#c4c4c4"><path d="M1429,1094 v-5 a7,7 0 0 1 14,0 v5" fill="none" stroke="#c4c4c4" stroke-width="3"/><rect x="1425" y="1093" width="22" height="16" rx="2"/></g>
<text x="1508.0" y="1105.0" font-size="23.5" fill="#000" textLength="77.0" lengthAdjust="spacingAndGlyphs" >0:01:00</text>
<rect x="1616" y="1095" width="4" height="4" fill="#c2c2c2" />
<rect x="1610" y="1101" width="4" height="4" fill="#c2c2c2" />
<rect x="1616" y="1101" width="4" height="4" fill="#c2c2c2" />
<rect x="1604" y="1107" width="4" height="4" fill="#c2c2c2" />
<rect x="1610" y="1107" width="4" height="4" fill="#c2c2c2" />
<rect x="1616" y="1107" width="4" height="4" fill="#c2c2c2" />
<rect x="490" y="162" width="689" height="846" rx="16" fill="#000" opacity="0.30" filter="url(#dshadow)"/>
<rect x="496" y="182" width="677" height="836" rx="16" fill="#000" opacity="0.2" filter="url(#dshadow2)"/>
<rect x="490.5" y="155" width="688" height="847" rx="9" fill="#f0f0f0" stroke="#8f8f8f" stroke-width="1"/>
<clipPath id="dlgclip"><rect x="490" y="155" width="689" height="847" rx="8.5"/></clipPath><g clip-path="url(#dlgclip)">
<rect x="490" y="155" width="689" height="47" fill="#ffffff" />
</g>
<rect x="490.5" y="155" width="688" height="847" rx="9" fill="none" stroke="#8f8f8f" stroke-width="1"/>
<text x="493.5" y="187.5" font-size="23.5" fill="#000" textLength="200.5" lengthAdjust="spacingAndGlyphs" >config Właściwości</text>
<text x="1033.0" y="187.0" font-size="25" fill="#000" textLength="14.0" lengthAdjust="spacingAndGlyphs" >?</text>
<path d="M1121.5,169 L1140.5,188 M1140.5,169 L1121.5,188" stroke="#000" stroke-width="1.8"/>
<rect x="598.5" y="216.5" width="164.5" height="35.5" fill="#f0f0f0" stroke="#dedede" stroke-width="1"/>
<rect x="501.5" y="212.5" width="97" height="39.5" fill="#f9f9f9" stroke="#dedede" stroke-width="1"/>
<rect x="501.5" y="251.5" width="661.5" height="677.5" fill="#f9f9f9" stroke="#e3e3e3" stroke-width="1"/>
<rect x="502" y="250" width="96" height="3" fill="#f9f9f9" />
<text x="516.7" y="238.3" font-size="22" fill="#000" textLength="66.8" lengthAdjust="spacingAndGlyphs" >Ogólne</text>
<text x="606.7" y="242.5" font-size="22" fill="#000" textLength="147.5" lengthAdjust="spacingAndGlyphs" >Suma kontrolna</text>
<rect x="530" y="271.6" width="64" height="63.7" fill="#ffffff" />
<defs><linearGradient id="bigFld" x1="0" y1="0" x2="1" y2="1"><stop offset="0" stop-color="#fee59a"/><stop offset="0.6" stop-color="#fdd978"/><stop offset="1" stop-color="#fcc832"/></linearGradient></defs>
<path d="M534,324 V284 a3,3 0 0 1 3,-3 h15.5 a3,3 0 0 1 2.3,1.1 l4,4.9 h28.2 a3,3 0 0 1 3,3 V322 a3,3 0 0 1 -3,3 H537 a3,3 0 0 1 -3,-3 Z" fill="#f4b41a"/>
<path d="M534,322 V294 a3,3 0 0 1 3,-3 h16 l5,-3 h29 a3,3 0 0 1 3,3 V322 a3,3 0 0 1 -3,3 H537 a3,3 0 0 1 -3,-3 Z" fill="url(#bigFld)"/>
<rect x="672" y="292" width="464" height="31.600000000000023" fill="#ffffff" />
<text x="671.0" y="311.7" font-size="22" fill="#000" textLength="58.4" lengthAdjust="spacingAndGlyphs" >config</text>
<line x1="524" y1="347.2" x2="1140" y2="347.2" stroke="#a0a0a0" stroke-width="1.2"/>
<rect x="672" y="369" width="464" height="32" fill="#ffffff" />
<text x="523.0" y="389.8" font-size="22" fill="#000" textLength="95.4" lengthAdjust="spacingAndGlyphs" >Położenie:</text>
<text x="672.5" y="389.8" font-size="22" fill="#000" >/</text>
<rect x="672" y="410.5" width="308" height="33.30000000000001" fill="#ffffff" />
<text x="523.0" y="432.0" font-size="22" fill="#000" textLength="83.0" lengthAdjust="spacingAndGlyphs" >Rozmiar:</text>
<text x="671.0" y="432.0" font-size="22" fill="#000" textLength="87.0" lengthAdjust="spacingAndGlyphs" >Nieznane</text>
<rect x="987.5" y="396.5" width="151.5" height="46" fill="#fdfdfd" rx="4" stroke="#d0d0d0" stroke-width="1"/>
<text x="1028.0" y="428.0" font-size="22" fill="#000" textLength="70.0" lengthAdjust="spacingAndGlyphs" >Przelicz</text>
<line x1="524" y1="497.5" x2="1140" y2="497.5" stroke="#a0a0a0" stroke-width="1.2"/>
<rect x="672" y="522" width="464" height="33" fill="#ffffff" />
<text x="523.0" y="542.7" font-size="22" fill="#000" textLength="99.0" lengthAdjust="spacingAndGlyphs" >Właściciel:</text>
<text x="671.0" y="542.7" font-size="22" fill="#000" textLength="76.5" lengthAdjust="spacingAndGlyphs" >s115944</text>
<rect x="672" y="576" width="464" height="32.5" fill="#ffffff" />
<text x="523.0" y="596.8" font-size="22" fill="#000" textLength="65.0" lengthAdjust="spacingAndGlyphs" >Grupa:</text>
<text x="671.0" y="596.8" font-size="22" fill="#000" textLength="76.5" lengthAdjust="spacingAndGlyphs" >s115944</text>
<line x1="524" y1="628" x2="1140" y2="628" stroke="#a0a0a0" stroke-width="1.2"/>
<text x="523.0" y="668.0" font-size="22" fill="#000" textLength="146.0" lengthAdjust="spacingAndGlyphs" >Prawa dostępu:</text>
<text x="672.0" y="668.7" font-size="22" fill="#000" textLength="92.0" lengthAdjust="spacingAndGlyphs" >Właściciel</text>
<rect x="777" y="649" width="25.8" height="25.8" rx="4.5" fill="#005fb8"/>
<path d="M784.5,662.5 l4,4 l7.5,-8.5" fill="none" stroke="#fff" stroke-width="1.5"/>
<text x="807.0" y="668.7" font-size="22" fill="#000" textLength="14.0" lengthAdjust="spacingAndGlyphs" >R</text>
<rect x="848" y="649" width="25.8" height="25.8" rx="4.5" fill="#005fb8"/>
<path d="M855.5,662.5 l4,4 l7.5,-8.5" fill="none" stroke="#fff" stroke-width="1.5"/>
<text x="878.0" y="668.7" font-size="22" fill="#000" textLength="21.0" lengthAdjust="spacingAndGlyphs" >W</text>
<rect x="919" y="649" width="25.8" height="25.8" rx="4.5" fill="#005fb8"/>
<path d="M926.5,662.5 l4,4 l7.5,-8.5" fill="none" stroke="#fff" stroke-width="1.5"/>
<text x="949.0" y="668.7" font-size="22" fill="#000" textLength="14.0" lengthAdjust="spacingAndGlyphs" >X</text>
<rect x="991.0" y="649.6" width="24.6" height="24.6" rx="4.5" fill="#f6f6f6" stroke="#8a8a8a" stroke-width="1.2"/>
<text x="1020.0" y="668.7" font-size="22" fill="#000" textLength="101.0" lengthAdjust="spacingAndGlyphs" >Ustaw UID</text>
<text x="672.0" y="706.5" font-size="22" fill="#000" textLength="58.5" lengthAdjust="spacingAndGlyphs" >Grupa</text>
<rect x="777" y="687.5" width="25.8" height="25.8" rx="4.5" fill="#005fb8"/>
<path d="M784.5,701.0 l4,4 l7.5,-8.5" fill="none" stroke="#fff" stroke-width="1.5"/>
<text x="807.0" y="706.5" font-size="22" fill="#000" textLength="14.0" lengthAdjust="spacingAndGlyphs" >R</text>
<rect x="848" y="687.5" width="25.8" height="25.8" rx="4.5" fill="#005fb8"/>
<path d="M855.5,701.0 l4,4 l7.5,-8.5" fill="none" stroke="#fff" stroke-width="1.5"/>
<text x="878.0" y="706.5" font-size="22" fill="#000" textLength="21.0" lengthAdjust="spacingAndGlyphs" >W</text>
<rect x="919" y="687.5" width="25.8" height="25.8" rx="4.5" fill="#005fb8"/>
<path d="M926.5,701.0 l4,4 l7.5,-8.5" fill="none" stroke="#fff" stroke-width="1.5"/>
<text x="949.0" y="706.5" font-size="22" fill="#000" textLength="14.0" lengthAdjust="spacingAndGlyphs" >X</text>
<rect x="991.0" y="688.1" width="24.6" height="24.6" rx="4.5" fill="#f6f6f6" stroke="#8a8a8a" stroke-width="1.2"/>
<text x="1020.0" y="706.5" font-size="22" fill="#000" textLength="101.0" lengthAdjust="spacingAndGlyphs" >Ustaw GID</text>
<text x="672.0" y="745.8" font-size="22" fill="#000" textLength="39.0" lengthAdjust="spacingAndGlyphs" >Inni</text>
<rect x="777" y="726" width="25.8" height="25.8" rx="4.5" fill="#005fb8"/>
<path d="M784.5,739.5 l4,4 l7.5,-8.5" fill="none" stroke="#fff" stroke-width="1.5"/>
<text x="807.0" y="745.8" font-size="22" fill="#000" textLength="14.0" lengthAdjust="spacingAndGlyphs" >R</text>
<rect x="848" y="726" width="25.8" height="25.8" rx="4.5" fill="#005fb8"/>
<path d="M855.5,739.5 l4,4 l7.5,-8.5" fill="none" stroke="#fff" stroke-width="1.5"/>
<text x="878.0" y="745.8" font-size="22" fill="#000" textLength="21.0" lengthAdjust="spacingAndGlyphs" >W</text>
<rect x="919" y="726" width="25.8" height="25.8" rx="4.5" fill="#005fb8"/>
<path d="M926.5,739.5 l4,4 l7.5,-8.5" fill="none" stroke="#fff" stroke-width="1.5"/>
<text x="949.0" y="745.8" font-size="22" fill="#000" textLength="14.0" lengthAdjust="spacingAndGlyphs" >X</text>
<rect x="991.0" y="726.6" width="24.6" height="24.6" rx="4.5" fill="#f6f6f6" stroke="#8a8a8a" stroke-width="1.2"/>
<text x="1020.0" y="745.8" font-size="22" fill="#000" textLength="81.0" lengthAdjust="spacingAndGlyphs" >Lepki bit</text>
<text x="672.0" y="791.0" font-size="22" fill="#000" textLength="100.0" lengthAdjust="spacingAndGlyphs" >Ósemkowy</text>
<rect x="772" y="763.5" width="121" height="32" fill="#ffffff" stroke="#e0e0e0" stroke-width="1"/>
<line x1="772" y1="795.3" x2="893" y2="795.3" stroke="#868686" stroke-width="1.2"/>
<text x="774.0" y="786.6" font-size="22" fill="#000" textLength="44.0" lengthAdjust="spacingAndGlyphs" >0777</text>
<rect x="675.6" y="815.0" width="24.3" height="24.3" rx="4.5" fill="#f3f3f3" stroke="#c8c8c8" stroke-width="1.2"/>
<text x="706.0" y="835.0" font-size="22" fill="#8a8a8a" textLength="176.3" lengthAdjust="spacingAndGlyphs" >Nadaj X katalogom</text>
<line x1="524" y1="857" x2="1140" y2="857" stroke="#a0a0a0" stroke-width="1.2"/>
<rect x="532.4" y="879.5" width="25.5" height="25.5" rx="4.5" fill="#005fb8"/>
<path d="M539.9,893.0 l4,4 l7.5,-8.5" fill="none" stroke="#fff" stroke-width="1.5"/>
<text x="563.0" y="900.0" font-size="22" fill="#000" textLength="131.8" lengthAdjust="spacingAndGlyphs" >Rekurencyjnie</text>
<text x="701.7" y="900.0" font-size="22" fill="#000" textLength="54.3" lengthAdjust="spacingAndGlyphs" >ustaw</text>
<text x="762.6" y="900.0" font-size="22" fill="#000" textLength="105.8" lengthAdjust="spacingAndGlyphs" >właściciela,</text>
<text x="874.5" y="900.0" font-size="22" fill="#000" textLength="56.6" lengthAdjust="spacingAndGlyphs" >grupę</text>
<text x="936.2" y="900.0" font-size="22" fill="#000" >i</text>
<text x="949.4" y="900.0" font-size="22" fill="#000" textLength="57.6" lengthAdjust="spacingAndGlyphs" >prawa</text>
<text x="1013.2" y="900.0" font-size="22" fill="#000" textLength="74.9" lengthAdjust="spacingAndGlyphs" >dostępu</text>
<rect x="682.5" y="945.5" width="142" height="45" fill="#fdfdfd" rx="4" stroke="#0067c0" stroke-width="1.6"/>
<rect x="852.5" y="945.5" width="141" height="45" fill="#fdfdfd" rx="4" stroke="#d0d0d0" stroke-width="1"/>
<rect x="1021.5" y="945.5" width="141" height="45" fill="#fdfdfd" rx="4" stroke="#d0d0d0" stroke-width="1"/>
<text x="739.0" y="975.8" font-size="22" fill="#000" textLength="28.7" lengthAdjust="spacingAndGlyphs" >OK</text>
<text x="892.0" y="975.8" font-size="22" fill="#000" textLength="61.6" lengthAdjust="spacingAndGlyphs" >Anuluj</text>
<text x="1060.5" y="975.8" font-size="22" fill="#000" textLength="64.0" lengthAdjust="spacingAndGlyphs" >Pomoc</text>
</svg></body></html>
